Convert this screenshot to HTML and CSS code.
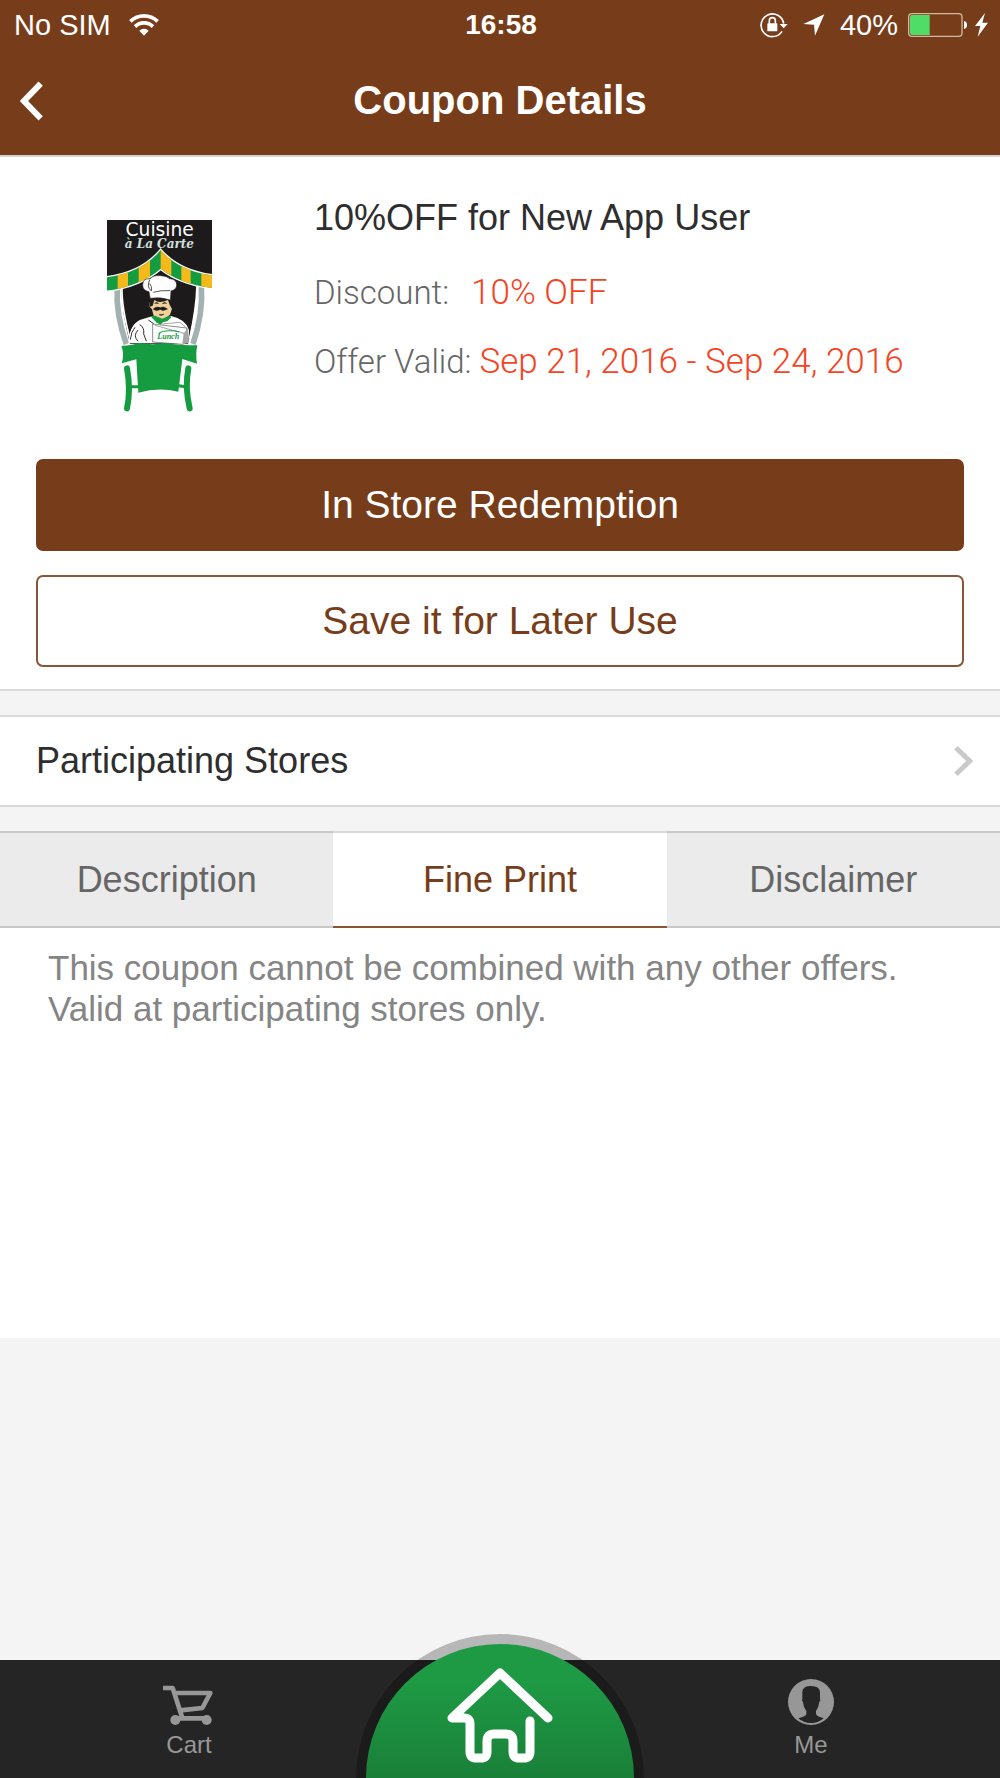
FILE: index.html
```html
<!DOCTYPE html>
<html lang="en">
  <head>
    <meta charset="UTF-8" />
    <meta name="viewport" content="width=device-width, initial-scale=1" />
    <title>Coupon Details</title>
    <link rel="stylesheet" href="styles.css" />
  </head>
  <body>
    <header class="header">
      <div class="status">
        <div class="status-left">
          <span>No SIM</span>
          <svg width="30" height="22" viewBox="0 0 90 66">
            <g fill="none" stroke="#fff" stroke-width="11">
              <path d="M4 22C27 0 63 0 86 22" />
              <path d="M18 38C33 23 57 23 72 38" />
            </g>
            <path d="M31 50C39 42 51 42 59 50L45 65Z" fill="#fff" />
          </svg>
        </div>
        <strong class="clock">16:58</strong>
        <div class="status-right">
          <svg class="lock" width="28" height="26" viewBox="0 0 84 78">
            <path d="M66 58A34 34 0 1 1 71 35" fill="none" stroke="#fff" stroke-width="5" />
            <path d="M59 36H83L71 49Z" fill="#fff" />
            <rect x="22" y="34" width="30" height="24" rx="2" fill="#fff" />
            <path d="M28 35V26A9 9 0 0 1 46 26V35" fill="none" stroke="#fff" stroke-width="5" />
          </svg>
          <svg class="arrow" width="22" height="22" viewBox="0 0 64 66">
            <path d="M63 1L35 65L32 32L0 30Z" fill="#fff" />
          </svg>
          <span>40%</span>
          <svg class="battery" width="60" height="24" viewBox="0 0 180 72">
            <rect x="2" y="2" width="160" height="68" rx="10" fill="none" stroke="#d5b79f" stroke-width="4" />
            <path d="M12 6H65V66H12Q6 66 6 60V12Q6 6 12 6Z" fill="#4fdd67" />
            <path d="M168 24Q177 26 177 36T168 48Z" fill="#fff" />
          </svg>
          <svg width="13" height="24" viewBox="0 0 39 72">
            <path d="M30 0L0 39H16L8 71L39 29H22Z" fill="#fff" />
          </svg>
        </div>
      </div>
      <div class="titlebar">
        <button class="back" type="button" aria-label="Back">
          <svg width="24" height="40" viewBox="0 0 72 120">
            <path d="M62 8L12 60L62 112" fill="none" stroke="#fff" stroke-width="18" />
          </svg>
        </button>
        <h1>Coupon Details</h1>
      </div>
    </header>

    <main>
      <section class="coupon">
        <div class="offer">
          <svg class="logo" viewBox="0 0 600 720" role="img" aria-label="Cuisine à La Carte">
            <defs>
              <clipPath id="awning">
                <path d="M111 262Q216 248 272 180Q326 243 426 256V294Q326 280 272 236Q212 288 111 302Z" />
              </clipPath>
            </defs>
            <path d="M111 90H426V258L272 236L111 262Z" fill="#1d1a1b" />
            <text class="logo-name" x="269" y="137">Cuisine</text>
            <text class="logo-sub" x="268" y="173">à La Carte</text>

            <!-- window and side posts -->
            <path d="M154 290L272 236L381 288Q380 350 354 462H180Q154 360 154 290Z" fill="#1d1a1b" />
            <path d="M142 292Q136 370 169 462M394 288Q400 370 369 462" fill="none" stroke="#a4b1b2" stroke-width="17" />
            <path d="M156 290Q154 350 181 450M381 288Q379 355 359 445" fill="none" stroke="#fff" stroke-width="5" />

            <!-- awning -->
            <path d="M111 262Q216 248 272 180Q326 243 426 256V294Q326 280 272 236Q212 288 111 302Z" fill="none" stroke="#fff" stroke-width="8" />
            <g clip-path="url(#awning)">
              <path d="M111 170H426V310H111Z" fill="#159b40" />
              <path d="M143 170H174V310H143ZM206 170H240V310H206ZM272 170H304V310H272ZM334 170H362V310H334ZM394 170H426V310H394Z" fill="#f5b91b" />
            </g>

            <!-- chef -->
            <path d="M176 460Q176 408 209 390L246 379L270 402L303 378Q348 388 357 420L355 460Z" fill="#fff" />
            <path d="M244 326H302V350L306 356L300 374L276 392L252 382L246 358L239 350V338Z" fill="#eed19b" />
            <path d="M238 324H304L307 350L300 347L294 330Q267 342 253 330L248 347L240 350Z" fill="#211d1e" />
            <path d="M242 379L255 377L277 386L298 377L304 382L292 394L278 397L272 404L260 398Z" fill="#159b40" />
            <path d="M240 321L237 305Q219 302 218 286Q218 263 240 267Q248 255 272 257Q291 258 299 266Q320 267 320 285Q320 298 303 303L301 330Q270 319 240 325Z" fill="#fff" stroke="#302d2e" stroke-width="2" />
            <path d="M245 303Q246 289 239 280M239 270Q229 290 244 303M301 302Q270 300 250 307" fill="none" stroke="#555" stroke-width="3" />
            <path d="M250 357Q259 348 271 353Q280 347 292 357Q278 365 270 358Q260 366 250 357ZM254 340Q260 335 266 341M277 341Q284 335 290 340M267 374Q275 378 282 372" fill="#211d1e" stroke="#211d1e" stroke-width="2" />
            <path d="M209 404Q224 412 221 432L229 453M204 454Q188 437 204 420M181 449Q183 425 195 412M235 390Q253 398 260 416" fill="none" stroke="#322f30" stroke-width="3" />
            <path d="M248 402L350 414L352 459L337 463L248 456Z" fill="#fff" stroke="#555" stroke-width="2" />
            <path d="M341 430L354 414V458L337 462Z" fill="#a4a6a7" />
            <path d="M255 406L342 430M276 402L330 397L350 414" fill="none" stroke="#777" stroke-width="2" />
            <text class="logo-lunch" x="262" y="446">Lunch</text>
            <path d="M268 428Q291 418 328 425" fill="none" stroke="#159b40" stroke-width="3" />

            <!-- table -->
            <path d="M154 468Q184 466 209 459Q248 466 286 459Q327 466 382 466Q376 493 381 521L337 507L325 605Q266 590 205 608L199 508L155 520Q164 491 154 468Z" fill="#159b40" />
            <path d="M171 535Q183 600 171 655M355 535Q344 590 359 655" fill="none" stroke="#159b40" stroke-width="18" stroke-linecap="round" />
            <path d="M176 590H206M326 587L352 591" fill="none" stroke="#159b40" stroke-width="9" />
          </svg>
          <div class="info">
            <h2>10%OFF for New App User</h2>
            <p><span class="label discount">Discount:</span>10% OFF</p>
            <p><span class="label">Offer Valid:</span>Sep 21, 2016 - Sep 24, 2016</p>
          </div>
        </div>
        <button class="btn btn-primary" type="button">In Store Redemption</button>
        <button class="btn" type="button">Save it for Later Use</button>
      </section>

      <a class="stores" href="#stores">
        <span>Participating Stores</span>
        <svg width="20" height="32" viewBox="0 0 60 96">
          <path d="M6 8L47 48L6 88" fill="none" stroke="#c9c9c9" stroke-width="15" />
        </svg>
      </a>

      <div class="tabs" role="tablist">
        <button class="tab" type="button" role="tab">Description</button>
        <button class="tab active" type="button" role="tab" aria-selected="true">Fine Print</button>
        <button class="tab" type="button" role="tab">Disclaimer</button>
      </div>
      <div class="panel" role="tabpanel">
        This coupon cannot be combined with any other offers.<br />
        Valid at participating stores only.
      </div>
    </main>

    <nav class="tabbar">
      <a class="nav-item" href="#cart">
        <svg width="52" height="46" viewBox="0 0 156 138">
          <g fill="none" stroke="#979797" stroke-width="14" stroke-linejoin="round">
            <path d="M0 27H29L59 120M35 42H142L118 87L52 94" />
            <path d="M37 118H134" />
          </g>
          <circle cx="37" cy="123" r="15" fill="#979797" />
          <circle cx="131" cy="123" r="15" fill="#979797" />
        </svg>
        <span>Cart</span>
      </a>
      <a class="home" href="#home" aria-label="Home">
        <svg width="288" height="144" viewBox="0 0 288 144">
          <defs>
            <linearGradient id="green" x1="0" y1="0" x2="0" y2="1">
              <stop offset="0.3" stop-color="#1e9944" />
              <stop offset="1" stop-color="#1a8039" />
            </linearGradient>
          </defs>
          <path d="M0 144A144 144 0 0 1 288 144Z" fill="#000" fill-opacity="0.25" />
          <path d="M10 144A134 134 0 0 1 278 144Z" fill="url(#green)" />
          <path d="M192 84L144 39L96 84H108Q114 84 114 90V118Q114 124 120 124H125Q131 124 131 118V107Q131 100 138 100H150Q157 100 157 107V118Q157 124 163 124H168Q174 124 174 118V87" fill="none" stroke="#fff" stroke-width="9" stroke-linecap="round" stroke-linejoin="round" />
        </svg>
      </a>
      <a class="nav-item me" href="#me">
        <svg width="46" height="46" viewBox="0 0 138 138">
          <circle cx="69" cy="69" r="69" fill="#979797" />
          <path d="M31 118Q54 112 55 106V96Q46 85 45 69Q40 65 43 59V38Q44 21 69 21Q95 21 96 39V59Q99 65 94 69Q92 86 84 96V106Q87 113 107 118Q92 132 69 132Q46 132 31 118Z" fill="#252525" />
        </svg>
        <span>Me</span>
      </a>
    </nav>
  </body>
</html>
```

FILE: styles.css
```css
* {
  box-sizing: border-box;
}
body {
  margin: 0;
  min-height: 100vh;
  display: flex;
  flex-direction: column;
  font-family: "Liberation Sans", Arial, sans-serif;
  background: #f4f4f4;
  color: #2e2e2e;
}
h1,
h2,
p {
  margin: 0;
  font-weight: normal;
}
a {
  color: inherit;
  text-decoration: none;
}
button {
  font-family: inherit;
  cursor: pointer;
}
svg {
  display: block;
  flex-shrink: 0;
}

/* header */
.header {
  background: #773d1a;
  color: #fff;
  border-bottom: 2px solid #d6d3d6;
}
.status {
  display: grid;
  grid-template-columns: 1fr auto 1fr;
  align-items: center;
  height: 50px;
  padding: 0 12px 0 14px;
  font-size: 29px;
}
.status-left,
.status-right {
  display: flex;
  align-items: center;
}
.status-left {
  gap: 18px;
}
.status-right {
  justify-content: flex-end;
}
.clock {
  font-size: 28px;
}
.lock,
.arrow {
  margin-right: 15px;
}
.battery {
  margin: 0 7px 0 10px;
}
.titlebar {
  display: grid;
  grid-template-columns: 60px 1fr 60px;
  align-items: center;
  height: 105px;
  padding-bottom: 4px;
}
.titlebar h1 {
  font-size: 40px;
  font-weight: bold;
  text-align: center;
}
.back {
  padding: 0 0 0 20px;
  border: none;
  background: none;
}

/* coupon */
.coupon {
  background: #fff;
  padding: 33px 36px 22px;
  border-bottom: 2px solid #d9d9d9;
}
.offer {
  display: flex;
  gap: 44px;
  padding-left: 34px;
  margin-bottom: 29px;
}
.logo {
  width: 200px;
  height: 240px;
}
.logo-name {
  font: 56px "DejaVu Sans", sans-serif;
  fill: #fff;
  text-anchor: middle;
}
.logo-sub {
  font: italic bold 36px "DejaVu Serif", serif;
  fill: #d3e0df;
  text-anchor: middle;
}
.logo-lunch {
  font: italic bold 24px "Liberation Serif", serif;
  fill: #159b40;
}
.info h2 {
  padding: 7px 0 4px;
  font-size: 36px;
  line-height: 42px;
}
.info p {
  margin-top: 31px;
  font-family: Roboto, "Liberation Sans", sans-serif;
  font-weight: 300;
  font-size: 35px;
  line-height: 38px;
  color: #f5431f;
}
.info .label {
  margin-right: 8px;
  color: #666;
  font-size: 33px;
}
.info .discount {
  margin-right: 22px;
}
.btn {
  display: block;
  width: 100%;
  height: 92px;
  border: 2px solid #8a5636;
  border-radius: 7px;
  background: #fff;
  color: #773d1a;
  font-size: 39px;
}
.btn-primary {
  margin-bottom: 24px;
  border-color: #773d1a;
  background: #773d1a;
  color: #fff;
}

/* stores row */
.stores {
  display: flex;
  align-items: center;
  justify-content: space-between;
  height: 92px;
  margin: 24px 0;
  padding: 0 26px 0 36px;
  background: #fff;
  border-top: 2px solid #d9d9d9;
  border-bottom: 2px solid #d9d9d9;
  font-size: 36px;
}

/* tabs */
.tabs {
  display: grid;
  grid-template-columns: repeat(3, 1fr);
}
.tab {
  height: 97px;
  border: 0 solid #c8c8c8;
  border-width: 2px 0;
  background: #ebebeb;
  color: #666;
  font-size: 36px;
}
.tab.active {
  border-top-color: #d9d9d9;
  border-bottom-color: #8a5636;
  background: #fff;
  color: #773d1a;
}
.panel {
  min-height: 410px;
  padding: 19px 48px;
  background: #fff;
  color: #858585;
  font-size: 35px;
  line-height: 41px;
}

/* bottom bar */
.tabbar {
  display: grid;
  grid-template-columns: 1fr 288px 1fr;
  height: 118px;
  margin-top: auto;
  background: #252525;
  color: #979797;
  font-size: 24px;
}
.nav-item {
  display: flex;
  flex-direction: column;
  align-items: center;
  gap: 6px;
  padding-top: 19px;
  padding-left: 22px;
}
.me {
  padding-left: 0;
  padding-right: 22px;
}
.home {
  margin-top: -26px;
}
```
